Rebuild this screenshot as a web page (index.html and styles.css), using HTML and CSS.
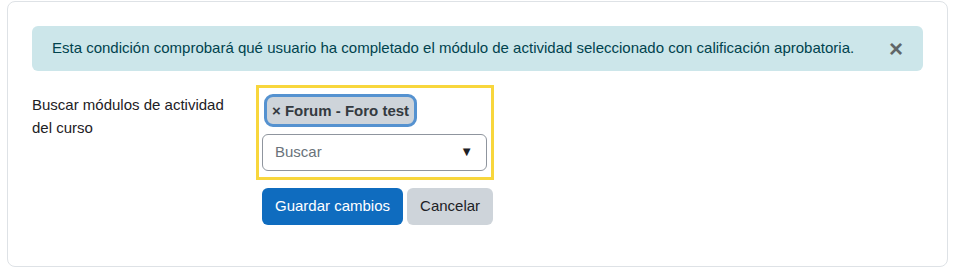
FILE: index.html
```html
<!DOCTYPE html>
<html lang="es">
<head>
<meta charset="utf-8">
<title>Condición</title>
<link rel="stylesheet" href="styles.css">
</head>
<body>
<div class="card">
  <div class="alert">
    <span class="alert-text">Esta condición comprobará qué usuario ha completado el módulo de actividad seleccionado con calificación aprobatoria.</span>
    <span class="close">×</span>
  </div>
  <div class="row">
    <label class="label">Buscar módulos de actividad del curso</label>
    <div class="field">
      <div class="highlight">
        <div class="chips"><span class="chip">× Forum - Foro test</span></div>
        <div class="select"><span class="placeholder">Buscar</span><span class="caret">▼</span></div>
      </div>
      <div class="buttons">
        <button class="btn btn-primary">Guardar cambios</button>
        <button class="btn btn-secondary">Cancelar</button>
      </div>
    </div>
  </div>
</div>
</body>
</html>
```
FILE: styles.css
```css
html, body { margin: 0; padding: 0; background: #fff; }
body {
  padding: 1px 7px 0 7px;
  font-family: "Liberation Sans", Arial, sans-serif;
  font-size: 15px;
  line-height: 22.5px;
  color: #1d2125;
}
.card {
  width: 941px;
  box-sizing: border-box;
  height: 266px;
  border: 1px solid #dee2e6;
  border-radius: 8px;
  padding: 24px 24px 0 24px;
}
.alert {
  display: flex;
  align-items: center;
  justify-content: space-between;
  background: #cce6ea;
  color: #00434e;
  border-radius: 6px;
  padding: 11px 20px 11px 20px;
  height: 45px;
  box-sizing: border-box;
}
.close {
  font-size: 24px;
  font-weight: 700;
  color: #5f6668;
  line-height: 1;
  margin-right: 0;
}
.row {
  display: flex;
  margin-top: 14px;
}
.label {
  width: 224px;
  padding-top: 9px;
  box-sizing: border-box;
  padding-right: 20px;
}
.field { display: flex; flex-direction: column; align-items: flex-start; }
.highlight {
  border: 3px solid #f8d63c;
  padding: 6px 4px 6px 3px;
  width: 238px;
  box-sizing: border-box;
}
.chips { padding-left: 2px; margin-bottom: 7px; }
.chip {
  display: inline-block;
  background: #ced4da;
  border: 3px solid #5592d0;
  border-radius: 9px;
  padding: 2px 5px;
  font-weight: 700;
  color: #343a40;
  line-height: 23px;
}
.select {
  display: flex;
  justify-content: space-between;
  align-items: center;
  height: 37px;
  box-sizing: border-box;
  border: 1px solid #8f959e;
  border-radius: 6px;
  padding: 0 13px 0 12px;
}
.placeholder { color: #6a737b; }
.caret { font-size: 13px; color: #1d2125; }
.buttons {
  display: flex;
  gap: 4px;
  margin-top: 8px;
  margin-left: 6px;
}
.btn {
  font-family: inherit;
  font-size: 15px;
  line-height: 22.5px;
  height: 37px;
  padding: 0 13px;
  border: 0;
  border-radius: 6px;
}
.btn-primary { background: #0f6cbf; color: #fff; }
.btn-secondary { background: #ced4da; color: #1d2125; }
```
